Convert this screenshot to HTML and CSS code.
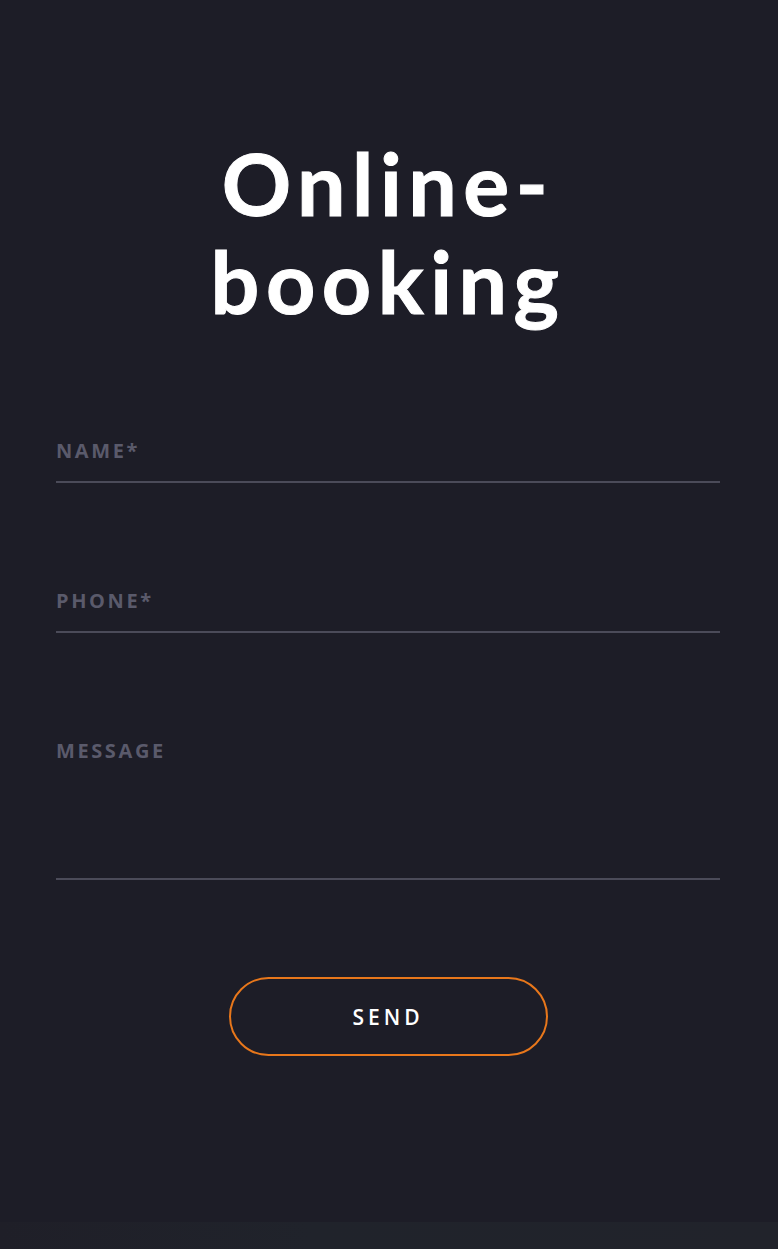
FILE: index.html
```html
<!DOCTYPE html>
<html lang="en">
<head>
<meta charset="utf-8">
<title>Online-booking</title>
<link rel="stylesheet" href="styles.css">
</head>
<body>
<main class="booking">
  <h1 class="title">Online-<br>booking</h1>
  <form class="form">
    <label class="field">
      <span class="label">NAME*</span>
      <span class="line"></span>
    </label>
    <label class="field">
      <span class="label">PHONE*</span>
      <span class="line"></span>
    </label>
    <label class="field field-message">
      <span class="label">MESSAGE</span>
      <span class="line"></span>
    </label>
    <div class="actions">
      <button type="button" class="send">SEND</button>
    </div>
  </form>
</main>
<div class="strip"></div>
</body>
</html>
```
FILE: styles.css
```css
html, body {
  margin: 0;
  padding: 0;
  background: #1d1d27;
}
body {
  font-family: "Open Sans", "Liberation Sans", sans-serif;
  height: 1249px;
  overflow: hidden;
  display: flex;
  flex-direction: column;
}
.booking {
  flex: 1;
  padding: 134px 58px 0 56px;
}
.title {
  margin: 0;
  text-align: center;
  color: #ffffff;
  font-family: "Lato", "Noto Sans", sans-serif;
  font-weight: 700;
  font-size: 86px;
  line-height: 98px;
  letter-spacing: 6.5px;
  -webkit-text-stroke: 1px #ffffff;
}
.form {
  margin-top: 108px;
  display: flex;
  flex-direction: column;
}
.field {
  display: flex;
  flex-direction: column;
  height: 150px;
}
.label {
  color: #5a5a6b;
  font-weight: 700;
  font-size: 20px;
  letter-spacing: 2.6px;
  line-height: 26px;
}
.line {
  display: block;
  height: 2px;
  background: #4b4b59;
  margin-top: 17px;
}
.field-message {
  height: auto;
}
.field-message .line {
  margin-top: 114px;
}
.actions {
  display: flex;
  justify-content: center;
  margin-top: 97px;
}
.send {
  width: 319px;
  height: 79px;
  border: 2px solid #e8771b;
  border-radius: 40px;
  background: transparent;
  color: #ffffff;
  font-family: "Open Sans", "Liberation Sans", sans-serif;
  font-weight: 600;
  font-size: 21px;
  letter-spacing: 4px;
  padding: 0;
}
.strip {
  height: 27px;
  background: linear-gradient(90deg, #1f1f28 0%, #20232b 40%, #21232b 100%);
}
```
